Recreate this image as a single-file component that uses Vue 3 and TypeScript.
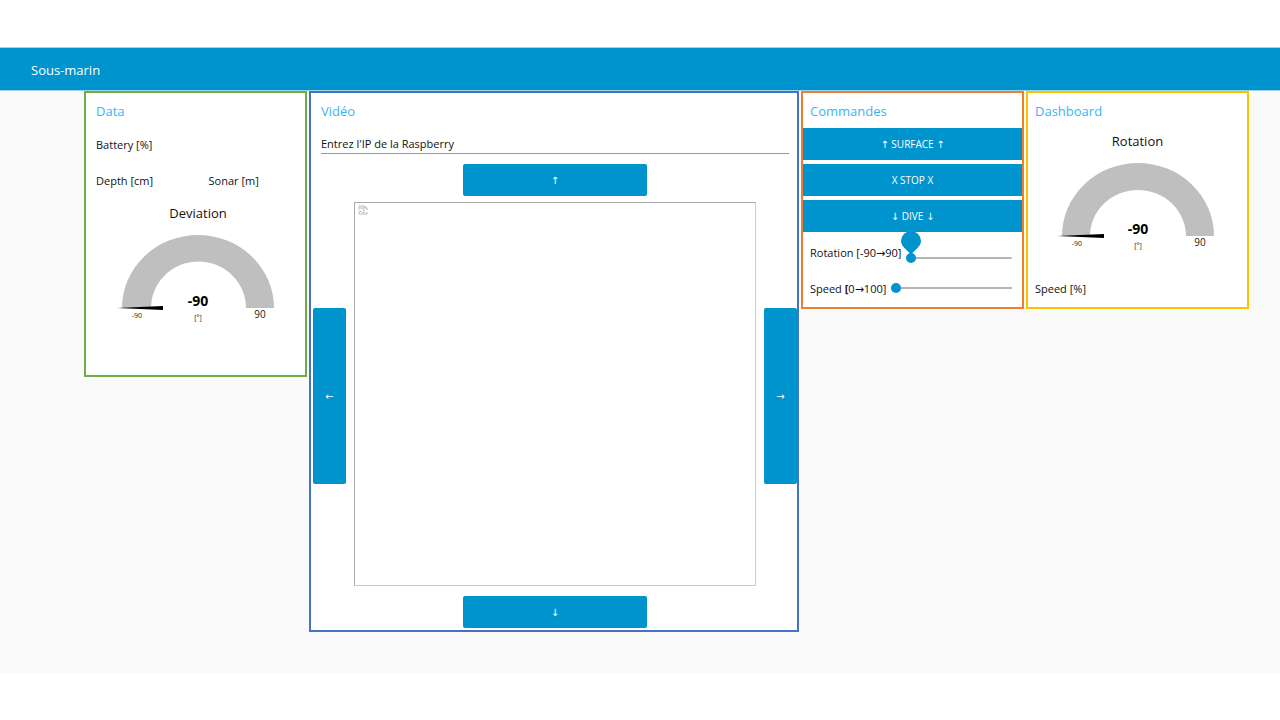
<script setup lang="ts">
import { ref } from 'vue'

interface Gauge {
  title: string
  value: number
}

const deviation: Gauge = { title: 'Deviation', value: -90 }
const rotationGauge: Gauge = { title: 'Rotation', value: -90 }

const address = ref('')
const rotation = ref(-90)
const speed = ref(0)
const actions = ['↑ SURFACE ↑', 'X STOP X', '↓ DIVE ↓']
</script>

<template>
  <div class="page">
    <header class="bar">
      <h1>Sous-marin</h1>
    </header>

    <main class="board">
      <section class="card data">
        <h2>Data</h2>
        <div class="readings">
          <span class="wide">Battery [%]</span>
          <span>Depth [cm]</span>
          <span>Sonar [m]</span>
        </div>
        <div class="gauge">
          <h3>{{ deviation.title }}</h3>
          <svg viewBox="0 0 168 92" width="168" height="92" role="img" :aria-label="deviation.title">
            <path class="arc" d="M8 75 A76 73 0 0 1 160 75 H132 A47 46 0 0 0 37 75 Z" />
            <path d="M3 75 L49 73 V77 Z" />
            <text class="value" x="84" y="73">{{ deviation.value }}</text>
            <text class="unit" x="84" y="87">[°]</text>
            <text class="low" x="23" y="85">-90</text>
            <text class="high" x="146" y="85">90</text>
          </svg>
        </div>
      </section>

      <section class="card video">
        <h2>Vidéo</h2>
        <input v-model="address" class="address" type="text" aria-label="Entrez l'IP de la Raspberry" placeholder="Entrez l'IP de la Raspberry" />
        <div class="pad">
          <button class="btn up" type="button">↑</button>
          <button class="btn side left" type="button">←</button>
          <div class="frame">
            <svg viewBox="0 0 10 10" width="10" height="10" aria-hidden="true">
              <path d="M1 5 V1 H6 L9 3 V5 M6 1 V3 H9 M2 3 H5 V5 L7 6 M1 9 H9 V7 M1 9 V7 L3 6 L5 8 L7 7" />
            </svg>
          </div>
          <button class="btn side right" type="button">→</button>
          <button class="btn down" type="button">↓</button>
        </div>
      </section>

      <section class="card commands">
        <h2>Commandes</h2>
        <div class="stack">
          <button v-for="action in actions" :key="action" class="btn" type="button">{{ action }}</button>
          <div class="slider">
            <label for="rotation">Rotation [-90→90]</label>
            <span class="track low-track">
              <input id="rotation" v-model.number="rotation" type="range" min="-90" max="90" />
              <svg class="pin" viewBox="0 0 20 24" width="20" height="24" aria-hidden="true">
                <path d="M10 24 C8 20 0 16 0 10 A10 10 0 0 1 20 10 C20 16 12 20 10 24 Z" />
              </svg>
            </span>
          </div>
          <div class="slider">
            <label for="speed">Speed <b>[</b>0→100]</label>
            <span class="track">
              <input id="speed" v-model.number="speed" type="range" min="0" max="100" />
            </span>
          </div>
        </div>
      </section>

      <section class="card dashboard">
        <h2>Dashboard</h2>
        <div class="gauge">
          <h3>{{ rotationGauge.title }}</h3>
          <svg viewBox="0 0 168 92" width="168" height="92" role="img" :aria-label="rotationGauge.title">
            <path class="arc" d="M8 75 A76 73 0 0 1 160 75 H132 A48 46 0 0 0 36 75 Z" />
            <path d="M3 75 L50 73 V77 Z" />
            <text class="value" x="84" y="73">{{ rotationGauge.value }}</text>
            <text class="unit" x="84" y="87">[°]</text>
            <text class="low" x="23" y="85">-90</text>
            <text class="high" x="146" y="85">90</text>
          </svg>
        </div>
        <p>Speed [%]</p>
      </section>
    </main>
  </div>
</template>

<style>
body {
  background: #fff;
}
</style>

<style scoped>
.page {
  padding: 47px 0;
  color: #111;
  font: 11px/16px "Open Sans", "DejaVu Sans", sans-serif;
}

.page * {
  box-sizing: border-box;
}

h1,
h2,
h3,
p {
  margin: 0;
  font-weight: 400;
}

.bar {
  display: flex;
  align-items: center;
  height: 44px;
  padding: 2px 31px 0;
  border-top: 1px solid #99d3ec;
  border-bottom: 1px solid #99d3ec;
  background: #0094ce;
  color: #fff;
}

h1 {
  font-size: 13px;
}

.board {
  display: grid;
  grid-template-columns: 223fr 490fr 223fr 223fr;
  align-items: start;
  gap: 2px;
  padding: 0 31px 41px 84px;
  background: #fafafa;
}

.card {
  min-width: 0;
  border: 2px solid;
  background: #fff;
}

h2 {
  height: 35px;
  padding-left: 10px;
  color: #37b5f5;
  font-size: 13px;
  line-height: 36px;
}

.data {
  padding-bottom: 50px;
  border-color: #70ad47;
}

.video {
  padding-bottom: 2px;
  border-color: #4472c4;
}

.commands {
  padding-bottom: 3px;
  border-color: #ed7d31;
}

.dashboard {
  padding-bottom: 2px;
  border-color: #ffc000;
}

.commands h2,
.dashboard h2 {
  padding-left: 7px;
}

.readings {
  display: grid;
  grid-template-columns: 7fr 6fr;
  row-gap: 4px;
  padding: 1px 0 0 10px;
  line-height: 32px;
}

.readings .wide {
  grid-column: 1 / -1;
}

.gauge {
  display: flex;
  flex-direction: column;
  align-items: center;
}

.data .gauge {
  padding: 6px 0 0 5px;
}

.dashboard .gauge {
  padding-top: 3px;
}

h3 {
  font-size: 13px;
  line-height: 20px;
}

.gauge svg {
  display: block;
  margin-top: 10px;
  overflow: visible;
}

.gauge text {
  fill: #222;
  text-anchor: middle;
}

.gauge .arc {
  fill: #bfbfbf;
}

.gauge .value {
  fill: #000;
  font-size: 14px;
  font-weight: 700;
}

.gauge .unit,
.gauge .low {
  font-size: 7px;
}

.gauge .high {
  font-size: 10px;
}

.dashboard p {
  padding: 20px 7px 0;
  line-height: 32px;
}

.address {
  display: block;
  width: calc(100% - 18px);
  height: 26px;
  margin: 0 8px 10px 10px;
  padding: 6px 0 0;
  border: 0;
  border-bottom: 1px solid #4fb2dc;
  outline: 0;
  background: transparent;
  color: #111;
  font: inherit;
}

.address::placeholder {
  color: #111;
  opacity: 1;
}

.btn {
  height: 32px;
  padding: 0;
  border: 0;
  border-radius: 2px;
  background: #0094ce;
  color: #fff;
  font: 10px/16px "Open Sans", "DejaVu Sans", sans-serif;
}

.pad {
  display: grid;
  grid-template-columns: 33px 1fr 33px;
  grid-template-rows: 32px 388px 32px;
  column-gap: 8px;
  row-gap: 6px;
  padding-left: 2px;
}

.up,
.down {
  grid-column: 2;
  justify-self: center;
  width: 184px;
}

.up {
  grid-row: 1;
}

.down {
  grid-row: 3;
}

.side {
  grid-row: 1 / 4;
  align-self: center;
  height: 176px;
}

.left {
  grid-column: 1;
}

.right {
  grid-column: 3;
}

.frame {
  grid-column: 2;
  grid-row: 2;
  margin-bottom: 4px;
  padding: 2px 3px;
  border: 1px solid;
  border-color: #aaa #ccc #ccc #aaa;
}

.frame svg {
  display: block;
  fill: none;
  stroke: #bbb;
}

.stack {
  display: flex;
  flex-direction: column;
  gap: 4px;
}

.commands .btn {
  border-radius: 0;
}

.slider {
  display: flex;
  align-items: center;
  gap: 5px;
  height: 32px;
  padding: 1px 10px 0 7px;
}

.slider label {
  flex: none;
}

.slider b {
  color: #401018;
}

.track {
  position: relative;
  display: flex;
  flex: 1;
  min-width: 0;
  padding-bottom: 2px;
}

.low-track {
  padding: 11px 0 0;
}

.track input {
  width: 100%;
  height: 10px;
  margin: 0;
  appearance: none;
  background: linear-gradient(#b5b5b5, #b5b5b5) center / 100% 2px no-repeat;
}

.track input::-webkit-slider-thumb {
  width: 10px;
  height: 10px;
  appearance: none;
  border-radius: 50%;
  background: #0094ce;
}

.pin {
  position: absolute;
  bottom: 8px;
  left: -5px;
  fill: #0094ce;
}
</style>
